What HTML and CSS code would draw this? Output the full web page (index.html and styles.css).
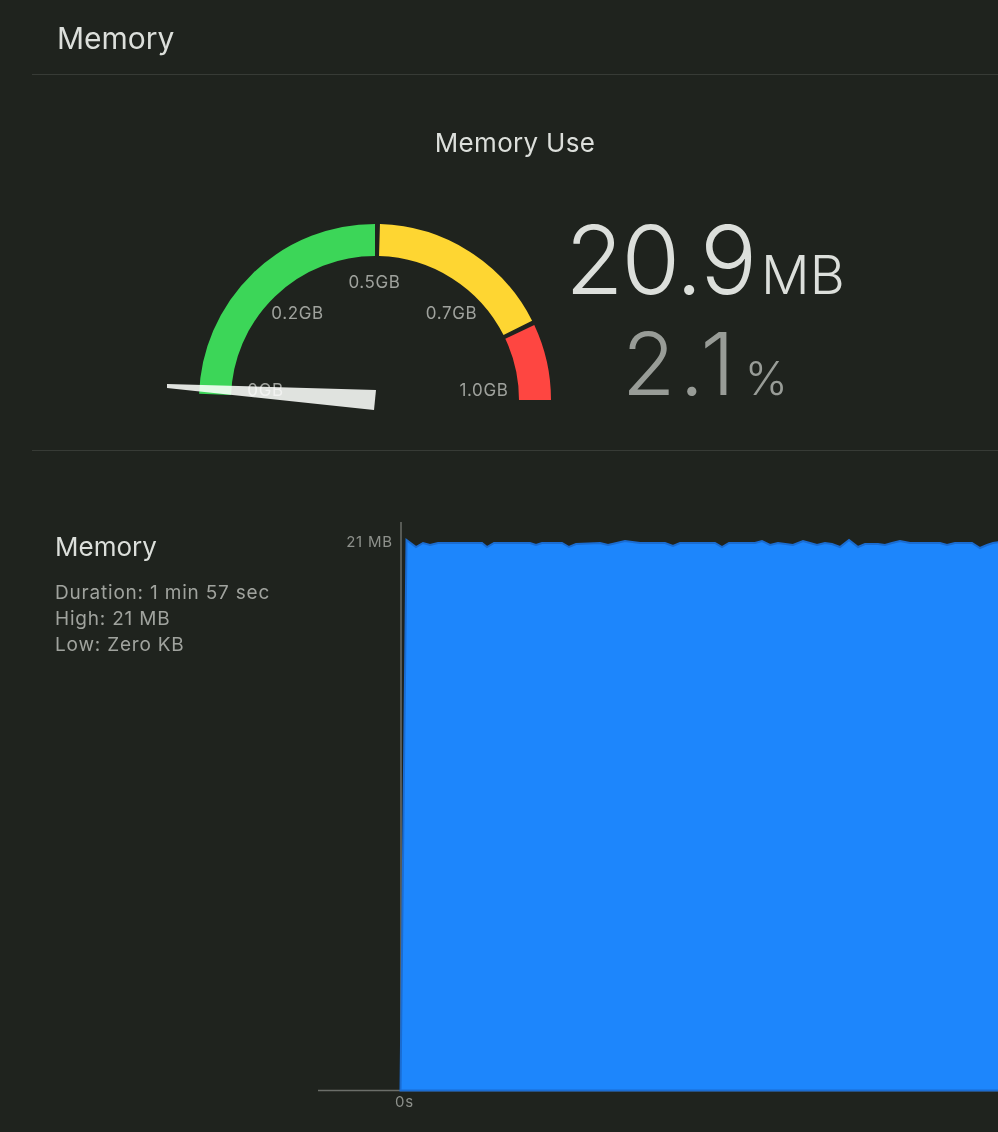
FILE: index.html
```html
<!DOCTYPE html>
<html>
<head>
<meta charset="utf-8">
<link rel="stylesheet" href="styles.css">
</head>
<body>
<div class="page">
  <header class="header"><h1 class="header-title">Memory</h1></header>
  <section class="overview">
    <h2 class="overview-title">Memory Use</h2>
    <div class="overview-row">
      <svg class="gauge" width="400" height="200" viewBox="0 0 400 200">
        <path class="arc arc-green" d="M55.1 179.4 A160 160 0 0 1 215 25"/>
        <path class="arc arc-yellow" d="M219.5 25.1 A160 160 0 0 1 357.8 112.9"/>
        <path class="arc arc-red" d="M359.8 116.9 A160 160 0 0 1 375 185"/>
        <text class="gauge-label" x="105.5" y="181">0GB</text>
        <text class="gauge-label" x="137.5" y="104">0.2GB</text>
        <text class="gauge-label" x="214.5" y="73">0.5GB</text>
        <text class="gauge-label" x="291.5" y="104">0.7GB</text>
        <text class="gauge-label" x="324" y="181">1.0GB</text>
        <polygon class="needle" points="7,169 216,175 214,195 7,173"/>
      </svg>
      <div class="readout">
        <div class="readout-main"><span class="big">20.9</span><span class="unit">MB</span></div>
        <div class="readout-pct"><span class="pct">2.1</span><span class="pct-unit">%</span></div>
      </div>
    </div>
  </section>
  <section class="detail">
    <div class="info">
      <h3 class="info-title">Memory</h3>
      <p class="info-line">Duration: 1 min 57 sec</p>
      <p class="info-line">High: 21 MB</p>
      <p class="info-line">Low: Zero KB</p>
    </div>
    <svg class="chart" width="680" height="681" viewBox="0 0 680 681">
      <g transform="translate(-318 -451)">
        <line class="axis" x1="401" y1="522" x2="401" y2="1090.5"/>
        <line class="axis" x1="318" y1="1090.5" x2="998" y2="1090.5"/>
        <path class="area" d="M400.5 1090.5 L406.5 540 L416 547 L423 543 L430 545 L438 543 L482 543 L487 547 L494 543 L530 543 L536 545 L542 543 L562 543 L569 547 L576 544 L600 543 L608 545 L625 541 L640 543 L665 543 L673 546 L680 543 L715 543 L722 547 L729 543 L755 543 L762 541 L770 545 L778 543 L793 545 L803 541 L810 543 L817 545 L825 543 L832 544 L840 547 L849 540 L858 547 L865 544 L878 544 L885 545 L892 543 L900 541 L910 543 L940 543 L947 545 L955 543 L972 543 L980 548 L987 545 L993 543 L1000 542 L1000 1090.5 Z"/>
        <text class="axis-label" x="393" y="547" text-anchor="end">21 MB</text>
        <text class="axis-label" x="395" y="1107">0s</text>
      </g>
    </svg>
  </section>
</div>
</body>
</html>
```
FILE: styles.css
```css
* { box-sizing: border-box; }
html, body {
  margin: 0;
  padding: 0;
  background: #1f231e;
  overflow: hidden;
}
body {
  width: 998px;
  height: 1132px;
  font-family: "Inter", "Liberation Sans", sans-serif;
  color: #dcdfdb;
}
.page {
  padding-left: 32px;
}
.header {
  height: 75px;
  border-bottom: 1px solid #373b36;
  padding-left: 25px;
  display: flex;
  align-items: flex-start;
}
.header-title {
  margin: 0;
  padding-top: 19px;
  font-size: 30px;
  font-weight: 400;
  line-height: 38px;
  color: #dcdfdb;
}
.overview {
  height: 376px;
  border-bottom: 1px solid #373b36;
  display: flex;
  flex-direction: column;
}
.overview-title {
  margin: 0;
  padding-top: 52px;
  text-align: center;
  font-size: 26px;
  font-weight: 400;
  line-height: 32px;
  letter-spacing: 0.3px;
  color: #dcdfdb;
}
.overview-row {
  display: flex;
  align-items: flex-start;
  margin-top: 56px;
}
.gauge {
  display: block;
  margin-left: 128px;
  flex: none;
}
.arc {
  fill: none;
  stroke-width: 32;
}
.arc-green { stroke: #3cd658; }
.arc-yellow { stroke: #fed632; }
.arc-red { stroke: #fe4641; }
.gauge-label {
  font-family: "Inter", "Liberation Sans", sans-serif;
  font-size: 17px;
  letter-spacing: 0.6px;
  fill: #9fa29d;
  text-anchor: middle;
}
.needle {
  fill: #dcdedb;
  mix-blend-mode: screen;
}
.readout {
  width: 290px;
  display: flex;
  flex-direction: column;
  align-items: center;
  margin-top: 7px;
}
.readout-main {
  display: flex;
  align-items: baseline;
  color: #dcdfdb;
}
.big {
  font-size: 95px;
  line-height: 76px;
  font-weight: 300;
  letter-spacing: -2px;
}
.unit {
  font-size: 54px;
  line-height: 54px;
  font-weight: 300;
  margin-left: 6px;
}
.readout-pct {
  display: flex;
  align-items: baseline;
  color: #989c97;
  margin-top: 27px;
}
.pct {
  font-size: 87px;
  line-height: 70px;
  font-weight: 300;
  letter-spacing: 4px;
}
.pct-unit {
  font-size: 46px;
  line-height: 46px;
  font-weight: 300;
  margin-left: 6px;
}
.detail {
  display: flex;
  height: 681px;
}
.info {
  width: 286px;
  flex: none;
  padding-left: 23px;
  padding-top: 80px;
}
.info-title {
  margin: 0 0 17px 0;
  font-size: 26px;
  font-weight: 400;
  line-height: 32px;
  color: #dcdfdb;
}
.info-line {
  margin: 0;
  font-size: 19px;
  line-height: 26px;
  letter-spacing: 0.8px;
  color: #a0a39e;
}
.chart {
  display: block;
  flex: none;
}
.axis {
  stroke: #6b6e69;
  stroke-width: 1.5;
}
.area {
  fill: #1d86fc;
  stroke: #1a6cd2;
  stroke-width: 2;
  stroke-linejoin: miter;
}
.axis-label {
  font-family: "Inter", "Liberation Sans", sans-serif;
  font-size: 15px;
  letter-spacing: 0.8px;
  fill: #8e918c;
}
```
